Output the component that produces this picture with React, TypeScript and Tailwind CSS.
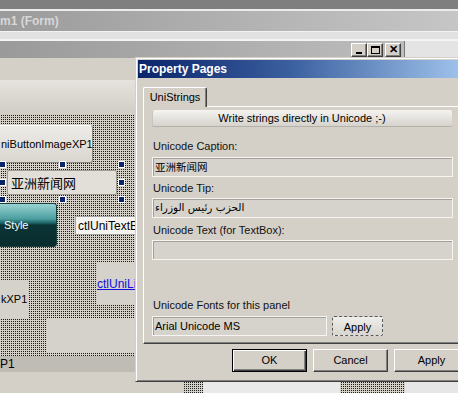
import React from 'react'

const GRID =
  'bg-[#d4d0c8] bg-[image:conic-gradient(#1a1a1a_25%,transparent_0)] bg-[length:2px_2px]'

const RAISED =
  'bg-[#d4d0c8] border border-t-white border-l-white border-b-[#404040] border-r-[#404040] shadow-[inset_-1px_-1px_0_#808080]'

function CaptionButton({ children }: { children: React.ReactNode }) {
  return (
    <div className={`flex h-[14px] w-[16px] items-center justify-center ${RAISED}`}>
      {children}
    </div>
  )
}

function Field({ children, className = '' }: { children?: React.ReactNode; className?: string }) {
  return (
    <div
      className={`flex h-[20px] items-center overflow-hidden whitespace-nowrap border border-[#f6f5f2] bg-[#d6d3cd] pl-[2px] shadow-[inset_1px_1px_0_#a3a09a] ${className}`}
    >
      {children}
    </div>
  )
}

function Label({ children, className = '' }: { children: React.ReactNode; className?: string }) {
  return <div className={`h-[14px] pl-[1px] leading-[14px] text-[#111] ${className}`}>{children}</div>
}

function DialogButton({ label, isDefault }: { label: string; isDefault?: boolean }) {
  return (
    <div
      className={`flex h-[23px] w-[75px] items-center justify-center bg-[#d4d0c8] text-[11px] text-black ${
        isDefault
          ? 'border border-black shadow-[inset_1px_1px_0_#fff,inset_-1px_-1px_0_#404040,inset_-2px_-2px_0_#808080]'
          : 'border border-t-white border-l-white border-b-[#404040] border-r-[#404040] shadow-[inset_-1px_-1px_0_#808080]'
      }`}
    >
      {label}
    </div>
  )
}

function Handle({ x, y }: { x: number; y: number }) {
  return (
    <div
      className="absolute h-[5px] w-[5px] bg-[#0a246a] outline outline-1 outline-white"
      style={{ left: x, top: y }}
    />
  )
}

function Designer() {
  return (
    <div className={`relative h-[241px] ${GRID}`}>
      {/* command button */}
      <div className="absolute left-[-20px] top-[10px] flex h-[38px] w-[113px] items-center rounded-[3px] border border-t-white border-l-white border-b-[#8d8a84] border-r-[#8d8a84] bg-[linear-gradient(to_bottom,#eeece8,#d9d6d0)] pl-[20px] text-[11px] text-black">
        niButtonImageXP1
      </div>

      {/* selected label */}
      <div className="absolute left-[7px] top-[55px] flex h-[25px] w-[110px] items-center rounded-[2px] border border-[#9e9b94] bg-[#e2dfd9] pl-[3px] font-['Noto_Sans_CJK_SC',sans-serif] text-[13px] text-black">
        亚洲新闻网
      </div>
      {[0, 60, 119].map((x) => (
        <Handle key={`t${x}`} x={x} y={47} />
      ))}
      <Handle x={0} y={65} />
      <Handle x={119} y={65} />
      {[0, 60, 119].map((x) => (
        <Handle key={`b${x}`} x={x} y={82} />
      ))}

      {/* styled button */}
      <div className="absolute left-[-10px] top-[88px] flex h-[44px] w-[67px] items-center rounded-[3px] border border-[#163f40] bg-[linear-gradient(to_bottom,#9ad2d2_0%,#4c9fa0_35%,#1b5e60_46%,#0b3436_50%,#0a2c2d_100%)] pl-[13px] text-[11px] text-white">
        Style
      </div>

      {/* text box, runs on under the dialog */}
      <div className="absolute left-[75px] top-[101px] flex h-[19px] w-[100px] items-center whitespace-nowrap border border-[#a5a5a5] bg-[#f4f3f0] pl-[2px] text-[12px] text-black">
        ctlUniTextBox1
      </div>

      {/* link label */}
      <div className="absolute left-[97px] top-[147px] flex h-[43px] w-[80px] items-center whitespace-nowrap bg-[#d5d2cb] text-[12px] text-[#1010e0] underline">
        ctlUniLink1
      </div>

      <div className="absolute left-0 top-[165px] flex h-[38px] w-[28px] items-center whitespace-nowrap bg-[#d5d2cb] pl-[1px] text-[11px] text-black">
        kXP1
      </div>

      <div className="absolute left-[47px] top-[203px] h-[35px] w-[100px] bg-[#d5d2cb]" />
    </div>
  )
}

function PropertyPages() {
  return (
    <div className="absolute left-[135px] top-[57px] h-[325px] w-[342px] border border-t-[#d4d0c8] border-l-[#d4d0c8] border-b-[#404040] border-r-[#404040] bg-[#d4d0c8] p-[2px] shadow-[inset_1px_1px_0_#fff,inset_-1px_-1px_0_#808080]">
      <div className="flex h-[18px] items-center bg-[linear-gradient(to_right,#0a246a,#3a5f9f_45%,#a6caf0)] pl-[1px] text-[12px] font-bold text-white">
        Property Pages
      </div>

      <div className="pl-[5px] pt-[9px]">
        <div className="relative z-10 flex h-[20px] w-[64px] items-center justify-center rounded-t-[2px] border-l border-t border-r border-l-white border-t-white border-r-[#404040] bg-[#d4d0c8] text-[11px] text-black shadow-[inset_-1px_0_0_#808080]">
          UniStrings
        </div>

        <div className="-mt-[1px] h-[238px] w-[330px] border border-t-white border-l-white border-b-[#404040] border-r-[#404040] pl-[8px] pt-[3px] text-[11px] shadow-[inset_-1px_-1px_0_#808080]">
          <div className="flex h-[17px] w-[300px] items-center justify-center rounded-[2px] border-b border-[#b4b1aa] bg-[linear-gradient(to_bottom,#f5f4f1,#e3e1dc_55%,#d6d3cd)] text-black shadow-[inset_1px_0_0_#c8c5be]">
            Write strings directly in Unicode ;-)
          </div>

          <Label className="mt-[12px]">Unicode Caption:</Label>
          <Field className="mt-[4px] w-[301px] font-['Noto_Sans_CJK_SC',sans-serif] text-[10.5px] text-black">
            亚洲新闻网
          </Field>

          <Label className="mt-[4px]">Unicode Tip:</Label>
          <Field className="mt-[3px] w-[301px] font-['DejaVu_Sans',sans-serif] text-[10.5px] text-black">
            <span dir="rtl">الحزب رئيس الوزراء</span>
          </Field>

          <Label className="mt-[5px]">Unicode Text (for TextBox):</Label>
          <Field className="mt-[3px] w-[301px]" />

          <Label className="mt-[38px]">Unicode Fonts for this panel</Label>
          <div className="mt-[4px] flex items-center gap-[5px]">
            <Field className="w-[175px] text-black">Arial Unicode MS</Field>
            <div className="flex h-[20px] w-[51px] items-center justify-center rounded-[2px] border border-dashed border-[#5a5a5a] bg-[linear-gradient(to_bottom,#efeeea,#d9d6d0)] pt-[2px] text-black">
              Apply
            </div>
          </div>
        </div>
      </div>

      <div className="ml-[94px] mt-[5px] flex gap-[6px]">
        <DialogButton label="OK" isDefault />
        <DialogButton label="Cancel" />
        <DialogButton label="Apply" />
      </div>
    </div>
  )
}

export default function App() {
  return (
    <div className="relative flex h-[393px] w-[458px] flex-col overflow-hidden bg-[#7f7f7f] font-['Liberation_Sans',Arial,sans-serif] text-[11px]">
      <div className="h-[9px] bg-[#7f7f7f]" />
      <div className="h-[2px] bg-[#ececec]" />
      <div className="flex h-[20px] items-center bg-[linear-gradient(to_right,#9b9b9b,#c6c6c6)] text-[12px] font-bold text-[#d8d8d8]">
        m1 (Form)
      </div>
      <div className="h-px bg-[#f2f2f2]" />
      <div className="h-[7px] bg-[#e2e2e2]" />
      <div className="h-[2px] bg-[#f4f4f4]" />

      {/* child window caption */}
      <div className="flex h-[17px]">
        <div className="flex w-[405px] items-center justify-end border-r border-[#7a7a7a] bg-[linear-gradient(to_right,#9a9a9a,#bdbdbd)] pr-[3px]">
          <CaptionButton>
            <div className="mt-[6px] h-[2px] w-[6px] bg-black" />
          </CaptionButton>
          <CaptionButton>
            <div className="h-[8px] w-[9px] border border-t-2 border-black" />
          </CaptionButton>
          <div className="ml-[2px]">
            <CaptionButton>
              <span className="text-[11px] font-bold leading-none text-black">✕</span>
            </CaptionButton>
          </div>
        </div>
        <div className="flex-1 bg-[#e4e4e4]" />
      </div>

      {/* body */}
      <div className="flex flex-1">
        <div className="flex w-[135px] flex-col">
          <div className="h-[22px] bg-[#d4d0c8]" />
          <div className="h-[35px] bg-[linear-gradient(to_bottom,#e6e3de,#d0cdc6)]" />
          <Designer />
          <div className="flex h-[16px] items-center bg-[#bfbcb5] text-[12px] text-black">P1</div>
          <div className="flex-1 bg-[#d4d0c8]" />
        </div>
        <div className="flex flex-1 flex-col justify-end bg-[#d4d0c8]">
          <div className="flex h-[11px]">
            <div className="w-[48px] bg-[#d4d0c8]" />
            <div className={`w-[20px] ${GRID}`} />
            <div className="w-[137px] bg-[#e9e9e9]" />
            <div className={`w-[65px] ${GRID}`} />
            <div className="flex-1 bg-[#e6e6e6]" />
          </div>
        </div>
      </div>

      <PropertyPages />
    </div>
  )
}
